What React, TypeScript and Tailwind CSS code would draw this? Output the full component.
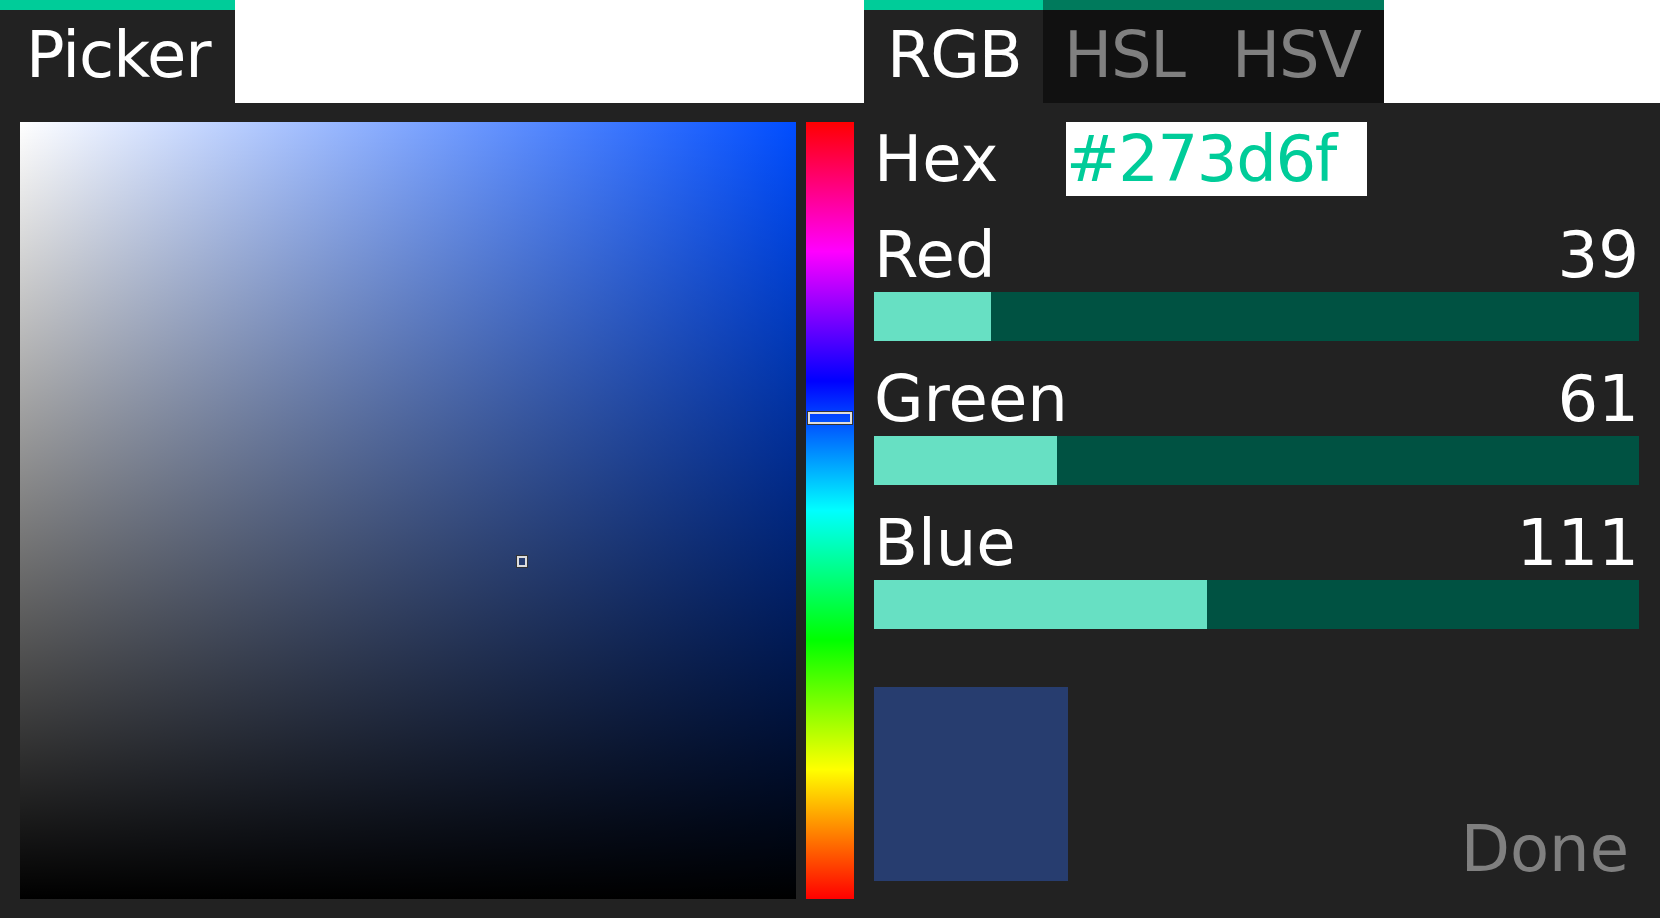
const hex = '#273d6f';

const channels = [
  { name: 'Red', value: 39, gap: 'mt-[22px]' },
  { name: 'Green', value: 61, gap: 'mt-[21px]' },
  { name: 'Blue', value: 111, gap: 'mt-[21px]' },
];

function Tab({
  label,
  active,
  width,
  pad,
}: {
  label: string;
  active: boolean;
  width: string;
  pad: string;
}) {
  return (
    <div className={`flex flex-col ${width} ${active ? 'bg-[#222222]' : 'bg-[#111111]'}`}>
      <div className={`h-[10px] ${active ? 'bg-[#00cc99]' : 'bg-[#007a5c]'}`} />
      <div
        className={`pt-[13px] ${pad} text-[64px] leading-none tracking-[-1.2px] whitespace-nowrap ${
          active ? 'text-white' : 'text-[#808080]'
        }`}
      >
        {label}
      </div>
    </div>
  );
}

function Slider({ name, value, gap }: { name: string; value: number; gap: string }) {
  const pct = (value / 255) * 100;
  return (
    <div className={gap}>
      <div className="flex justify-between text-[64px] leading-[74px] text-white">
        <span>{name}</span>
        <span>{value}</span>
      </div>
      <div className="h-[49px] bg-[#005242]">
        <div className="h-full bg-[#67e0c3]" style={{ width: `${pct}%` }} />
      </div>
    </div>
  );
}

export default function App() {
  return (
    <div className="flex h-[918px] w-[1660px] flex-col bg-white font-['DejaVu_Sans',sans-serif]">
      <div className="flex h-[103px]">
        <div className="w-[864px]">
          <div className="flex h-full w-[235px] flex-col bg-[#222222]">
            <div className="h-[10px] bg-[#00cc99]" />
            <div className="pt-[13px] pl-[26px] text-[64px] leading-none tracking-[-1px] text-white">
              Picker
            </div>
          </div>
        </div>
        <Tab label="RGB" active width="w-[179px]" pad="pl-[23px]" />
        <Tab label="HSL" active={false} width="w-[167px]" pad="pl-[21px]" />
        <Tab label="HSV" active={false} width="w-[174px]" pad="pl-[22px]" />
      </div>

      <div className="flex flex-1 bg-[#222222] pt-[19px] pl-[20px] pr-[21px]">
        <div className="relative h-[777px] w-[776px] bg-[linear-gradient(to_top,#000,transparent),linear-gradient(to_right,#fff,#004dff)]">
          <div className="absolute top-[433px] left-[496px] h-[13px] w-[12px] border border-[#333] bg-transparent">
            <div className="h-full w-full border-2 border-[#dddddd]" />
          </div>
        </div>

        <div className="relative ml-[10px] h-[777px] w-[48px] bg-[linear-gradient(to_bottom,#f00,#f0f,#00f,#0ff,#0f0,#ff0,#f00)]">
          <div className="absolute top-[289px] left-[1px] h-[14px] w-[46px] border border-[#333]">
            <div className="h-full w-full border-2 border-[#dddddd]" />
          </div>
        </div>

        <div className="ml-[20px] flex w-[765px] flex-col">
          <div className="flex h-[74px] text-[64px] leading-[74px]">
            <span className="w-[192px] text-white">Hex</span>
            <div className="h-[74px] w-[301px] bg-white tracking-[-1.4px] text-[#00cc99]">{hex}</div>
          </div>

          {channels.map((c) => (
            <Slider key={c.name} name={c.name} value={c.value} gap={c.gap} />
          ))}

          <div className="mt-[58px] flex justify-between">
            <div className="h-[194px] w-[194px] bg-[#273d6f]" />
            <div className="mt-[125px] mr-[10px] text-[64px] leading-[74px] text-[#808080]">Done</div>
          </div>
        </div>
      </div>
    </div>
  );
}
